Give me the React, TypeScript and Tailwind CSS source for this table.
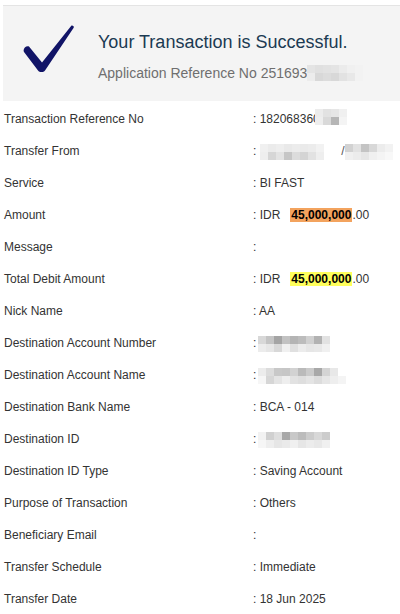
import React from "react";

type Cells = string[][];

function Mosaic({ cells, cell = 8 }: { cells: Cells; cell?: number }) {
  return (
    <span className="inline-flex flex-col align-middle">
      {cells.map((row, i) => (
        <span key={i} className="flex">
          {row.map((c, j) => (
            <span key={j} style={{ width: cell, height: cell, backgroundColor: c }} />
          ))}
        </span>
      ))}
    </span>
  );
}

const rows: { label: string; value: React.ReactNode }[] = [
  {
    label: "Transaction Reference No",
    value: (
      <span className="flex items-center">
        <span>: 18206836</span>
        <span className="relative">
          0
          <span className="absolute left-[2px] top-[-3px]">
            <Mosaic
              cells={[
                ["#ececec", "#e2e2e2", "#e6e6e6", "#f0f0f0"],
                ["#eeeeee", "#d9d9d9", "#b6b6b6", "#f4f4f4"],
              ]}
            />
          </span>
        </span>
      </span>
    ),
  },
  {
    label: "Transfer From",
    value: (
      <span className="flex items-center">
        <span>:</span>
        <span className="ml-[4px]">
          <Mosaic
            cells={[
              ["#f0f0f0", "#ebebeb", "#eeeeee", "#e9e9e9", "#ececec", "#eaeaea", "#ececec", "#f2f2f2", "#ffffff"],
              ["#eeeeee", "#d6d6d6", "#e3e3e3", "#c6c6c6", "#dcdcdc", "#d4d4d4", "#e2e2e2", "#eeeeee", "#ffffff"],
            ]}
          />
        </span>
        <span className="ml-[9px] text-[#555]">/</span>
        <span>
          <Mosaic
            cells={[
              ["#d2d2d2", "#e2e2e2", "#c4c4c4", "#d8d8d8", "#ececec", "#f2f2f2"],
              ["#f0f0f0", "#ececec", "#e6e6e6", "#f0f0f0", "#f4f4f4", "#f8f8f8"],
            ]}
          />
        </span>
      </span>
    ),
  },
  { label: "Service", value: ": BI FAST" },
  {
    label: "Amount",
    value: (
      <span>
        : IDR<span className="inline-block w-[10px]" />
        <span className="bg-[#f3a35e] font-bold text-black px-[1px]">45,000,000</span>.00
      </span>
    ),
  },
  { label: "Message", value: ":" },
  {
    label: "Total Debit Amount",
    value: (
      <span>
        : IDR<span className="inline-block w-[10px]" />
        <span className="bg-[#ffff5c] font-bold text-black px-[1px]">45,000,000</span>.00
      </span>
    ),
  },
  { label: "Nick Name", value: ": AA" },
  {
    label: "Destination Account Number",
    value: (
      <span className="flex items-center">
        <span>:</span>
        <span className="ml-[2px]">
          <Mosaic
            cells={[
              ["#d8d8d8", "#c4c4c4", "#a4a4a4", "#c2c2c2", "#b4b4b4", "#bcbcbc", "#d0d0d0", "#b2b2b2", "#e2e2e2"],
              ["#ececec", "#e6e6e6", "#d8d8d8", "#f0f0f0", "#e0e0e0", "#ececec", "#e6e6e6", "#e8e8e8", "#f0f0f0"],
            ]}
          />
        </span>
      </span>
    ),
  },
  {
    label: "Destination Account Name",
    value: (
      <span className="flex items-center">
        <span>:</span>
        <span className="ml-[2px]">
          <Mosaic
            cells={[
              ["#ececec", "#dcdcdc", "#c8c8c8", "#c6c6c6", "#d2d2d2", "#bababa", "#cacaca", "#a8a8a8", "#d4d4d4", "#e8e8e8", "#ffffff"],
              ["#f6f6f6", "#d6d6d6", "#e4e4e4", "#eeeeee", "#e2e2e2", "#dedede", "#e4e4e4", "#dcdcdc", "#e6e6e6", "#eeeeee", "#f4f4f4"],
            ]}
          />
        </span>
      </span>
    ),
  },
  { label: "Destination Bank Name", value: ": BCA - 014" },
  {
    label: "Destination ID",
    value: (
      <span className="flex items-center">
        <span>:</span>
        <span className="ml-[2px]">
          <Mosaic
            cells={[
              ["#f2f2f2", "#d0d0d0", "#dedede", "#a8a8a8", "#c8c8c8", "#bcbcbc", "#cccccc", "#d8d8d8", "#cccccc"],
              ["#f6f6f6", "#eeeeee", "#e6e6e6", "#eaeaea", "#f0f0f0", "#e6e6e6", "#ececec", "#e8e8e8", "#f0f0f0"],
            ]}
          />
        </span>
      </span>
    ),
  },
  { label: "Destination ID Type", value: ": Saving Account" },
  { label: "Purpose of Transaction", value: ": Others" },
  { label: "Beneficiary Email", value: ":" },
  { label: "Transfer Schedule", value: ": Immediate" },
  { label: "Transfer Date", value: ": 18 Jun 2025" },
];

export default function App() {
  return (
    <div
      className="w-[400px] h-[614px] overflow-hidden bg-white text-[#333333]"
      style={{ fontFamily: '"Liberation Sans", Arial, sans-serif' }}
    >
      <div className="mt-[5px] ml-[3px] h-[96px] border-t border-[#e4e4e4] bg-[#f4f4f4] flex items-start">
        <svg
          className="ml-[20px] mt-[19px] shrink-0"
          width="52"
          height="48"
          viewBox="0 0 52 48"
        >
          <path
            d="M48.5 0.5 C50 0 51.5 1.5 50.5 3 L22 45.5 C20.5 47.5 16.5 47.5 15 45.5 L1 27 C-0.5 24.5 2.5 20.5 6 21.5 L19 37.5 L48.5 0.5 Z"
            fill="#111467"
          />
        </svg>
        <div className="ml-[23px] mt-[25px]">
          <div className="text-[18px] leading-[22px] text-[#1b3a52]">Your Transaction is Successful.</div>
          <div className="mt-[11px] text-[14px] leading-[18px] text-[#6f6f6f] flex items-center">
            <span>Application Reference No 251693</span>
            <Mosaic
              cells={[
                ["#e4e4e4", "#e0e0e0", "#e2e2e2", "#e4e4e4", "#ebebeb", "#f0f0f0", "#f2f2f2"],
                ["#ececec", "#d8d8d8", "#dcdcdc", "#d8d8d8", "#e2e2e2", "#e8e8e8", "#f2f2f2"],
              ]}
            />
          </div>
        </div>
      </div>
      <div className="mt-[2px]">
        {rows.map((r) => (
          <div key={r.label} className="h-[32px] flex items-center text-[12px]">
            <div className="w-[253px] pl-[4px] shrink-0">{r.label}</div>
            <div className="flex-1">{r.value}</div>
          </div>
        ))}
      </div>
    </div>
  );
}
